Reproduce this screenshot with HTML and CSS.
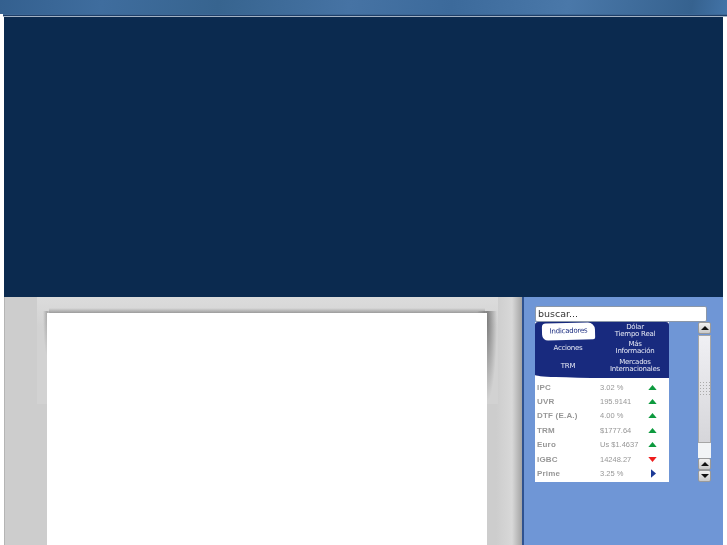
FILE: index.html
```html
<!DOCTYPE html>
<html>
    <head>
        <title>Indicadores</title>
        <link rel="stylesheet" href="styles.css">
    </head>
    <body>
        <div class="top-band"></div>
        <div class="top-rule"></div>
        <div class="page">
            <div class="banner"></div>
            <div class="content">
                <div class="main">
                    <div class="paper"></div>
                </div>
                <div class="side">
                    <input class="search" type="text" value="buscar...">
                    <div class="widget-row">
                        <div class="widget">
                            <div class="tabs">
                                <div class="tab tab-active">Indicadores</div>
                                <div class="tab">Dólar<br>Tiempo Real</div>
                                <div class="tab">Acciones</div>
                                <div class="tab">Más<br>Información</div>
                                <div class="tab">TRM</div>
                                <div class="tab">Mercados<br>Internacionales</div>
                            </div>
                            <div class="rows">
                                <div class="row"><span class="name">IPC</span><span class="value">3.02 %</span><svg class="arrow" viewBox="0 0 10 6"><polygon class="up" points="5,0 10,6 0,6"/></svg></div>
                                <div class="row"><span class="name">UVR</span><span class="value">195.9141</span><svg class="arrow" viewBox="0 0 10 6"><polygon class="up" points="5,0 10,6 0,6"/></svg></div>
                                <div class="row"><span class="name">DTF (E.A.)</span><span class="value">4.00 %</span><svg class="arrow" viewBox="0 0 10 6"><polygon class="up" points="5,0 10,6 0,6"/></svg></div>
                                <div class="row"><span class="name">TRM</span><span class="value">$1777.64</span><svg class="arrow" viewBox="0 0 10 6"><polygon class="up" points="5,0 10,6 0,6"/></svg></div>
                                <div class="row"><span class="name">Euro</span><span class="value">Us $1.4637</span><svg class="arrow" viewBox="0 0 10 6"><polygon class="up" points="5,0 10,6 0,6"/></svg></div>
                                <div class="row"><span class="name">IGBC</span><span class="value">14248.27</span><svg class="arrow" viewBox="0 0 10 6"><polygon class="down" points="0,0 10,0 5,6"/></svg></div>
                                <div class="row"><span class="name">Prime</span><span class="value">3.25 %</span><svg class="arrow-side" viewBox="0 0 6 10"><polygon class="same" points="0,0 6,5 0,10"/></svg></div>
                            </div>
                        </div>
                        <div class="scrollbar">
                            <div class="sb-btn"><span class="tri-up"></span></div>
                            <div class="sb-thumb"><div class="sb-grip"></div></div>
                            <div class="sb-track"></div>
                            <div class="sb-btn"><span class="tri-up"></span></div>
                            <div class="sb-btn"><span class="tri-down"></span></div>
                        </div>
                    </div>
                </div>
            </div>
        </div>
    </body>
</html>
```

FILE: styles.css
```css
html, body{
    margin: 0;
    height: 545px;
    overflow: hidden;
    background-color: white;
}
.top-band{
    height: 14px;
    background: linear-gradient(100deg, #34608f 0%, #3f6d9e 14%, #37648f 30%, #4673a4 48%, #3c6a9b 62%, #4a78a9 78%, #36628f 95%, #4374a8 100%);
}
.top-rule{
    height: 3px;
    margin-left: 3px;
    background: linear-gradient(#3d6796 0 1px, #1f3f68 1px 2px, #a3b2c4 2px 3px);
}
.page{
    margin: 0 4px;
}
.banner{
    height: 280px;
    background-color: #0b2a4f;
}
.content{
    display: flex;
    height: 248px;
}
.main{
    position: relative;
    box-sizing: border-box;
    width: 518px;
    padding: 16px 35px 0 43px;
    background: linear-gradient(90deg, #9c9c9c 0, #cdcdcd 1px, #cdcdcd 492px, #d8d8d8 508px, #a4a4a4 518px);
}
/* lighter patch behind the top of the sheet, with its soft shadow */
.main::before{
    content: "";
    position: absolute;
    left: 33px;
    top: 0;
    width: 461px;
    height: 107px;
    background:
        radial-gradient(ellipse 10px 80px at 10px 10px, #7c7c7c, transparent) 440px 14px / 21px 93px no-repeat,
        radial-gradient(ellipse 4px 45px at 4px 0, #a8a8a8, transparent) 6px 14px / 8px 50px no-repeat,
        linear-gradient(transparent, #9c9c9c) 12px 11px / 436px 5px no-repeat,
        linear-gradient(#dcdcdc, #d2d2d2 30px);
}
.paper{
    position: relative;
    height: 100%;
    background-color: white;
}
.side{
    flex: 1;
    box-sizing: border-box;
    padding: 9px 0 0 11px;
    background-color: #6f96d6;
    border-left: 2px solid #2f5290;
}
.search{
    display: block;
    box-sizing: border-box;
    width: 172px;
    height: 16px;
    margin: 0;
    padding: 0 2px 2px;
    border: 1px solid #8b97a8;
    border-radius: 2px;
    background-color: white;
    font: 9.5px "DejaVu Sans", sans-serif;
    color: #333;
    filter: blur(0.3px);
}
.widget-row{
    display: flex;
    gap: 29px;
    filter: blur(0.35px);
}
.widget{
    width: 134px;
    height: 160px;
    background-color: white;
}
.tabs{
    display: grid;
    grid-template-columns: 66px 68px;
    grid-template-rows: 17px 18px 18px;
    box-sizing: border-box;
    height: 56px;
    padding-bottom: 3px;
    background-color: #182a7e;
    border-radius: 3px 3px 0 0;
    border-bottom-left-radius: 70px 3px;
    color: #e6e9f5;
    font: 7px/7px "DejaVu Sans", sans-serif;
    letter-spacing: -0.25px;
    text-align: center;
}
.tab{
    display: flex;
    align-items: center;
    justify-content: center;
}
.tab-active{
    margin: 1px 6px -1px 7px;
    background-color: white;
    color: #182a7e;
    border-radius: 4px 7px 2px 6px;
    transform: rotate(-1.5deg);
}
.rows{
    padding-top: 2px;
}
.row{
    display: flex;
    align-items: center;
    height: 14.4px;
    padding-left: 2px;
    font-family: "Liberation Sans", sans-serif;
    color: #979797;
}
.name{
    width: 63px;
    font-size: 8px;
    font-weight: bold;
    letter-spacing: 0.2px;
}
.value{
    width: 48px;
    font-size: 7.5px;
}
.arrow{
    width: 9px;
    height: 5px;
}
.arrow-side{
    width: 5px;
    height: 9px;
    margin-left: 3px;
}
.up{
    fill: #0d9a3e;
}
.down{
    fill: #ee1c1c;
}
.same{
    fill: #1c3a96;
}
.scrollbar{
    display: flex;
    flex-direction: column;
    width: 13px;
    height: 160px;
}
.sb-btn{
    display: flex;
    align-items: center;
    justify-content: center;
    box-sizing: border-box;
    height: 12px;
    background: linear-gradient(#f2f2f2, #c9c9c9);
    border: 1px solid #9a9a9a;
    border-radius: 2px;
}
.sb-thumb{
    display: flex;
    align-items: center;
    height: 108px;
    box-sizing: border-box;
    margin-top: 1px;
    background: linear-gradient(#f0f0f4, #d6d6da);
    border: 1px solid #a6a6a6;
}
.sb-grip{
    width: 100%;
    height: 16px;
    background-image: radial-gradient(#aaaaaa 0.7px, transparent 0.8px);
    background-size: 3px 3px;
}
.sb-track{
    flex: 1;
    background-color: #f2f4f6;
}
.tri-up{
    border-left: 4px solid transparent;
    border-right: 4px solid transparent;
    border-bottom: 4px solid #111;
}
.tri-down{
    border-left: 4px solid transparent;
    border-right: 4px solid transparent;
    border-top: 4px solid #111;
}
```
